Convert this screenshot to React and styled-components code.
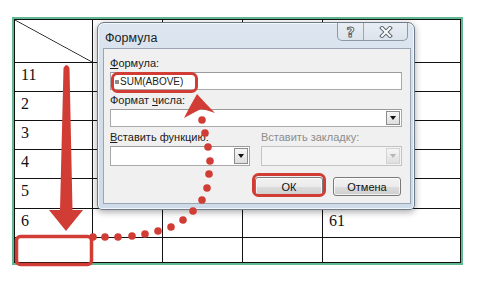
import React from 'react';
import styled, { createGlobalStyle } from 'styled-components';

const GlobalStyle = createGlobalStyle`
  html, body {
    margin: 0;
    padding: 0;
    background: #ffffff;
  }
  body {
    font-family: "Liberation Sans", Arial, sans-serif;
  }
`;

const Page = styled.div`
  position: relative;
  width: 480px;
  height: 281px;
  padding: 17px 0 0 12px;
  box-sizing: border-box;
  overflow: hidden;
`;

const Sheet = styled.div`
  width: 451px;
  height: 248px;
  box-sizing: border-box;
  border: 2px solid #62b893;
`;

const Grid = styled.div`
  height: 100%;
  box-sizing: border-box;
  border: 1px solid #111;
  background: #111;
  display: grid;
  grid-template-columns: 77px 69px 79px 79px 1fr;
  grid-template-rows: 42px 28px 28px 28px 28px 29px 28px 1fr;
  gap: 1px;
`;

const Cell = styled.div`
  background: ${(p) => (p.$diagonal
    ? 'linear-gradient(to top right, #fff calc(50% - 0.8px), #222 50%, #fff calc(50% + 0.8px))'
    : '#fff')};
  font-family: "Liberation Serif", "Times New Roman", serif;
  font-size: 16px;
  line-height: 16px;
  color: #111;
  padding: 4px 0 0 6px;
`;

const Dialog = styled.div`
  position: absolute;
  left: 97px;
  top: 22px;
  width: 318px;
  height: 188px;
  box-sizing: border-box;
  border: 1px solid #6d7b8b;
  border-radius: 7px 7px 5px 5px;
  background: linear-gradient(180deg, #dde6f0 0%, #d3deea 40%, #cfdbe8 100%);
  box-shadow: 0 2px 7px rgba(0, 0, 0, 0.35), inset 0 0 0 1px rgba(255, 255, 255, 0.7);
  padding: 0 3px 5px 5px;
  display: flex;
  flex-direction: column;
`;

const TitleBar = styled.div`
  height: 25px;
  display: flex;
  justify-content: space-between;
  align-items: flex-start;
`;

const Title = styled.div`
  font-family: "Liberation Sans", Arial, sans-serif;
  font-size: 12.5px;
  color: #1e1e1e;
  padding: 8px 0 0 2px;
`;

const CaptionButtons = styled.div`
  display: flex;
  height: 17px;
  margin-right: 3px;
  border: 1px solid #8d99a7;
  border-top: none;
  border-radius: 0 0 5px 5px;
  overflow: hidden;
  background: linear-gradient(180deg, #e9eef4, #dbe3ec);
`;

const CaptionButton = styled.div`
  width: ${(p) => p.$w}px;
  display: flex;
  align-items: center;
  justify-content: center;
  & + & {
    border-left: 1px solid #9aa6b3;
  }
`;

const HelpGlyph = styled.span`
  font-family: "DejaVu Sans", sans-serif;
  font-weight: bold;
  font-size: 14px;
  line-height: 14px;
  color: #fff;
  -webkit-text-stroke: 1px #5d6670;
`;

const Client = styled.div`
  flex: 1;
  background: #f0f0f0;
  border: 1px solid #99a5b3;
  padding: 7px 8px 0 6px;
  display: flex;
  flex-direction: column;
  font-size: 11px;
  color: #1a1a1a;
`;

const Label = styled.div`
  height: 14px;
  line-height: 14px;
  margin-top: ${(p) => p.$top || 0}px;
  margin-bottom: 2px;
  color: ${(p) => (p.$disabled ? '#8d8d8d' : '#1a1a1a')};
  white-space: nowrap;
`;

const Key = styled.span`
  text-decoration: underline;
`;

const Field = styled.div`
  height: ${(p) => p.$h || 18}px;
  box-sizing: border-box;
  border: 1px solid ${(p) => (p.$disabled ? '#c3c3c3' : '#a9a9a9')};
  border-top-color: ${(p) => (p.$disabled ? '#c3c3c3' : '#9a9a9a')};
  background: ${(p) => (p.$disabled ? '#f4f4f4' : '#ffffff')};
  display: flex;
  align-items: center;
  justify-content: space-between;
  padding: 0 1px 0 4px;
  font-size: 10px;
  color: #222;
`;

const Equals = styled.span`
  display: inline-block;
  width: 4px;
  height: 4px;
  background: #8c8c8c;
  margin-right: 1px;
  vertical-align: middle;
`;

const DropButton = styled.div`
  width: 14px;
  height: calc(100% - 2px);
  box-sizing: border-box;
  border: 1px solid ${(p) => (p.$disabled ? '#d3d3d3' : '#8c8c8c')};
  background: linear-gradient(180deg, #f6f6f6, #dedede);
  display: flex;
  align-items: center;
  justify-content: center;
  &::after {
    content: '';
    border-left: 3.5px solid transparent;
    border-right: 3.5px solid transparent;
    border-top: 4px solid ${(p) => (p.$disabled ? '#b5b5b5' : '#111')};
  }
`;

const Columns = styled.div`
  display: grid;
  grid-template-columns: 140px 1fr;
  column-gap: 11px;
  margin-top: 1px;
`;

const ButtonRow = styled.div`
  display: flex;
  justify-content: flex-end;
  gap: 10px;
  margin-top: 11px;
  padding-right: 1px;
`;

const Button = styled.div`
  width: 68px;
  height: 19px;
  box-sizing: border-box;
  border: 1px solid #7a7a7a;
  border-radius: 3px;
  background: linear-gradient(180deg, #f3f3f3 0%, #ebebeb 50%, #dcdcdc 51%, #cfcfcf 100%);
  box-shadow: inset 0 0 0 1px rgba(255, 255, 255, 0.7);
  display: flex;
  align-items: center;
  justify-content: center;
  font-size: 11px;
  color: #111;
`;

const Marks = styled.svg`
  position: absolute;
  left: 0;
  top: 0;
  pointer-events: none;
`;

const rows = ['11', '2', '3', '4', '5', '6', ''];

const dots = [
  [202, 120], [205, 133], [208, 147], [210, 161], [209, 174], [207, 188],
  [202, 200], [193, 211], [183, 220], [171, 227], [158, 231], [145, 234],
  [132, 236], [118, 237], [105, 237], [93, 237],
];

function Annotations() {
  const red = '#d13d35';
  return (
    <Marks width="480" height="281" viewBox="0 0 480 281">
      <rect x="112.5" y="73.5" width="84" height="18" rx="5" fill="none" stroke={red} strokeWidth="3" />
      <rect x="253.5" y="174.5" width="71" height="21" rx="5" fill="none" stroke={red} strokeWidth="3" />
      <rect x="16.5" y="236.5" width="75" height="28" rx="4" fill="none" stroke={red} strokeWidth="3.5" />
      <path
        d="M63.5 68 Q66.5 62 69.5 68 L72.5 210 L83 210 L66 231 L49 210 L60 210 Z"
        fill={red}
      />
      <path
        d="M197 94 Q206 104 215 113 Q207 110 201 109 Q193 113 184 118 Q190 106 197 94 Z"
        fill={red}
      />
      {dots.map(([x, y], i) => (
        <circle key={i} cx={x} cy={y} r="3.8" fill={red} />
      ))}
    </Marks>
  );
}

function CloseGlyph() {
  return (
    <svg width="14" height="12" viewBox="0 0 14 12">
      <path d="M3 2 L11 10 M11 2 L3 10" stroke="#5d6670" strokeWidth="4" strokeLinecap="square" />
      <path d="M3 2 L11 10 M11 2 L3 10" stroke="#ffffff" strokeWidth="2" strokeLinecap="square" />
    </svg>
  );
}

export default function App() {
  return (
    <Page>
      <GlobalStyle />
      <Sheet>
        <Grid>
          <Cell $diagonal />
          <Cell /><Cell /><Cell /><Cell />
          {rows.map((label, i) => (
            <React.Fragment key={i}>
              <Cell>{label}</Cell>
              <Cell /><Cell /><Cell />
              <Cell>{i === 5 ? '61' : ''}</Cell>
            </React.Fragment>
          ))}
        </Grid>
      </Sheet>

      <Dialog>
        <TitleBar>
          <Title>Формула</Title>
          <CaptionButtons>
            <CaptionButton $w={25}><HelpGlyph>?</HelpGlyph></CaptionButton>
            <CaptionButton $w={43}><CloseGlyph /></CaptionButton>
          </CaptionButtons>
        </TitleBar>
        <Client>
          <Label><Key>Ф</Key>ормула:</Label>
          <Field><span><Equals />SUM(ABOVE)</span></Field>
          <Label $top={3}>Формат <Key>ч</Key>исла:</Label>
          <Field><span /><DropButton /></Field>
          <Columns>
            <div>
              <Label $top={2}><Key>В</Key>ставить функцию:</Label>
              <Field $h={20}><span /><DropButton /></Field>
            </div>
            <div>
              <Label $top={2} $disabled>Вставить закладку:</Label>
              <Field $h={20} $disabled><span /><DropButton $disabled /></Field>
            </div>
          </Columns>
          <ButtonRow>
            <Button>ОК</Button>
            <Button>Отмена</Button>
          </ButtonRow>
        </Client>
      </Dialog>

      <Annotations />
    </Page>
  );
}
